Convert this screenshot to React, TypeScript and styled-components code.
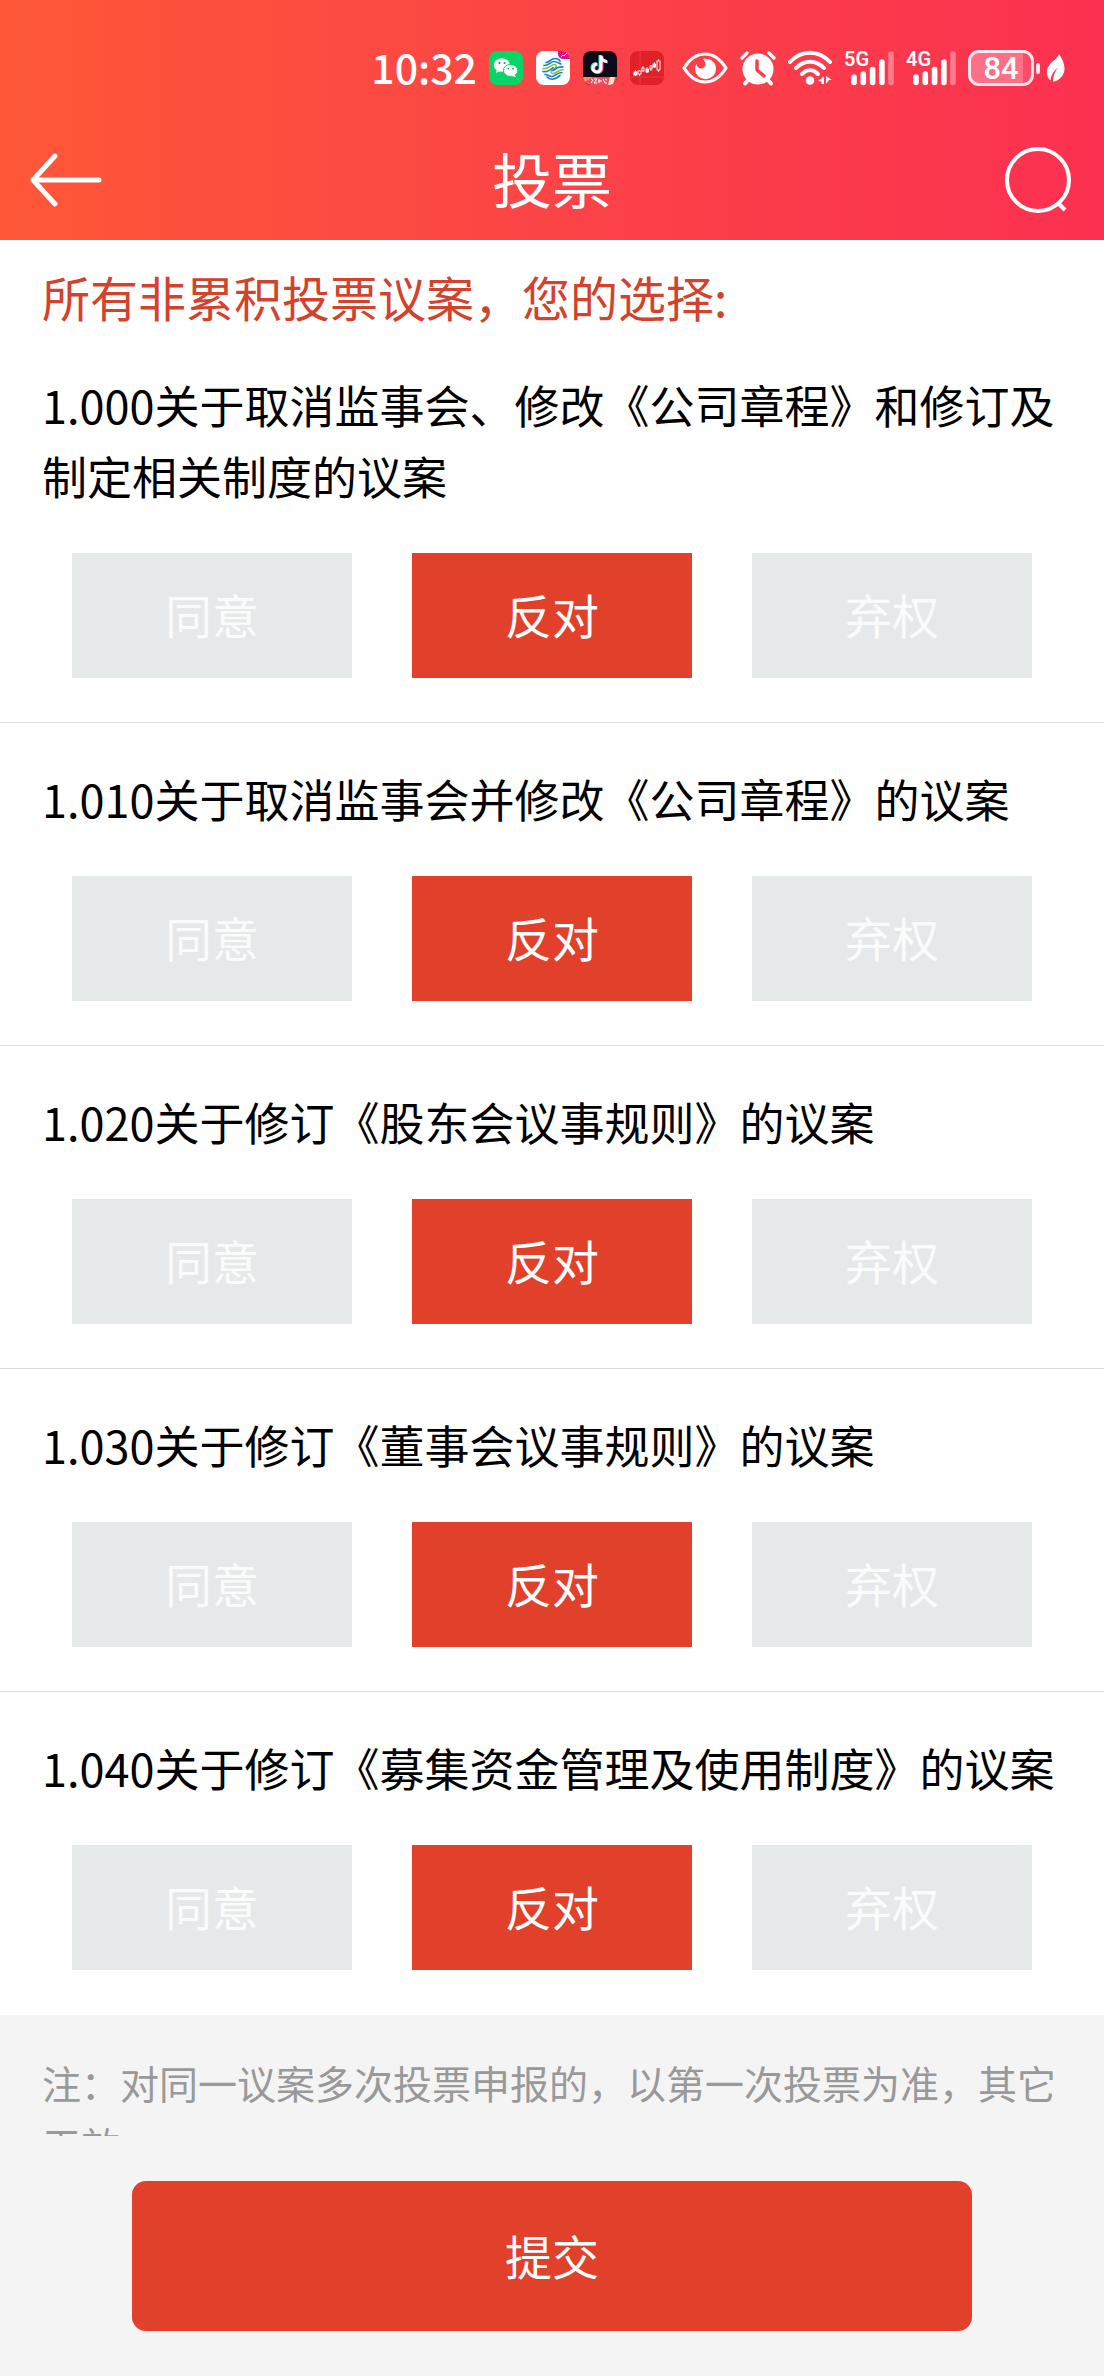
import React, { useState } from "react";
import styled, { createGlobalStyle } from "styled-components";

const GlobalStyle = createGlobalStyle`
  * { box-sizing: border-box; }
  body { margin: 0; background: #f4f4f4; }
  button { font: inherit; border: 0; padding: 0; cursor: pointer; }
`;

const Screen = styled.div`
  display: flex;
  flex-direction: column;
  height: 100vh;
  background: #f4f4f4;
  color: #000;
  font-family: "Noto Sans CJK SC", "Noto Sans", sans-serif;
`;

const Header = styled.header`
  flex: none;
  background: linear-gradient(90deg, #ff5738 0%, #fb4247 55%, #fc3051 100%);
  color: #fff;
`;

const StatusBar = styled.div`
  display: flex;
  align-items: center;
  justify-content: flex-end;
  gap: 12px;
  height: 120px;
  padding: 16px 38px 0 0;
`;

const Clock = styled.time`
  padding-bottom: 4px;
  font-size: 41px;
  line-height: 48px;
  font-weight: 500;
`;

const AppIcons = styled.div`
  display: flex;
  gap: 13px;
  margin-right: 6px;
`;

const BatteryGroup = styled.div`
  display: flex;
  align-items: center;
  gap: 2px;
`;

const Battery = styled.span`
  width: 66px;
  height: 36px;
  border: 3px solid #ffe9ee;
  border-radius: 11px;
  background: linear-gradient(90deg, #fd7188 86%, #fc4a68 86%);
  font-family: Roboto, sans-serif;
  font-size: 31px;
  line-height: 31px;
  font-weight: 500;
  text-align: center;
`;

const BatteryCap = styled.span`
  width: 4px;
  height: 11px;
  border-radius: 2px;
  background: #ffe9ee;
  margin-right: 4px;
`;

const NavBar = styled.div`
  display: grid;
  grid-template-columns: 1fr auto 1fr;
  align-items: center;
  height: 120px;
  padding: 0 30px;
`;

const NavButton = styled.button<{ $end?: boolean }>`
  display: flex;
  justify-self: ${(p) => (p.$end ? "end" : "start")};
  background: none;
  color: inherit;
`;

const Title = styled.h1`
  margin: 0;
  padding-bottom: 4px;
  font-size: 60px;
  line-height: 72px;
  font-weight: 400;
`;

const Scroller = styled.main`
  flex: 1;
  min-height: 0;
  overflow-y: auto;
  scrollbar-width: none;
`;

const Ballot = styled.section`
  padding-top: 26px;
  background: #fff;
`;

const Lead = styled.h2`
  margin: 0;
  padding: 0 42px 3px;
  color: #d2422d;
  font-size: 48px;
  line-height: 60px;
  font-weight: 400;
`;

const Motion = styled.article`
  padding: 40px 42px 44px;
  border-bottom: 1px solid #dcdcdc;
  &:last-child { border-bottom-color: transparent; }
`;

const MotionTitle = styled.h3`
  margin: 0;
  font-size: 45px;
  line-height: 71px;
  font-weight: 400;
`;

const Choices = styled.div`
  display: grid;
  grid-template-columns: repeat(3, 1fr);
  gap: 60px;
  margin-top: 42px;
  padding: 0 30px;
`;

const Choice = styled.button<{ $active: boolean }>`
  height: 125px;
  padding-bottom: 4px;
  background: ${(p) => (p.$active ? "#e1402b" : "#e5e9e9")};
  color: ${(p) => (p.$active ? "#fff" : "#fafbfb")};
  font-size: 47px;
`;

const Note = styled.p`
  margin: 0;
  padding: 36px 42px;
  color: #999;
  font-size: 39px;
  line-height: 62px;
`;

const Footer = styled.footer`
  flex: none;
  display: flex;
  padding: 45px 12%;
`;

const Submit = styled.button`
  flex: 1;
  height: 150px;
  padding-bottom: 4px;
  border-radius: 14px;
  background: #e1402b;
  color: #fff;
  font-size: 47px;
`;

const WeChatIcon = () => (
  <svg width="34" height="34" viewBox="0 0 34 34" aria-hidden="true">
    <rect width="34" height="34" rx="8" fill="#08d566" />
    <ellipse cx="12.8" cy="14" rx="8" ry="6.8" fill="#fff" />
    <path d="M8 18l-1 4 4-2z" fill="#fff" />
    <ellipse cx="21.600" cy="19.400" rx="7.200" ry="6" fill="#fff" stroke="#08d566" strokeWidth="1" />
    <path d="M25 23l2 3-4-1z" fill="#fff" />
    <g fill="#08a850">
      <circle cx="10.400" cy="12" r="1.100" />
      <circle cx="15.600" cy="12" r="1.100" />
      <circle cx="19.400" cy="17.600" r="0.900" />
      <circle cx="24" cy="17.600" r="0.900" />
    </g>
  </svg>
);

const MobileIcon = () => (
  <svg width="34" height="34" viewBox="0 0 34 34" aria-hidden="true">
    <rect width="34" height="34" rx="8" fill="#fff" />
    <path d="M22 0h4a8 8 0 0 1 8 8h-7a5 5 0 0 1-5-5z" fill="#d8108c" />
    <path d="M25 6l2-2 1 1 3-3" fill="none" stroke="#fff" strokeWidth="1" />
    <g fill="none" strokeWidth="1.700" strokeLinecap="round" strokeLinejoin="round">
      <path d="M10 11.500c3 0 5-4 9-4 2 0 4 1 5 2.500" stroke="#1683c4" />
      <path d="M8 14.500c5 0 7-4 10-4s5 2 7 2.500" stroke="#1683c4" />
      <path d="M7 17.500c6 1 8-4 11-4 3 0 3 3 0 4.500s-4 4.500-1 4.500 5-3.500 10-4" stroke="#8cc33c" />
      <path d="M7 20.500c4 1 7-1 10-4M17 19.500c4-3 6-4 10-3.500" stroke="#1683c4" />
      <path d="M9 23.500c3 0 4 2 7 2s5-4 10-4" stroke="#1683c4" />
      <path d="M11 26c3 3 8 3 13-1.500" stroke="#1683c4" />
    </g>
  </svg>
);

const TikTokIcon = () => (
  <svg width="34" height="34" viewBox="0 0 34 34" aria-hidden="true">
    <clipPath id="tt"><rect width="34" height="34" rx="8" /></clipPath>
    <g clipPath="url(#tt)">
      <rect width="34" height="34" fill="#0b0a16" />
      <g fill="none" strokeWidth="3">
        <path d="M17 4v12.500a4 4 0 1 1-4-4M17 5c0 3 3 5 6 5" stroke="#35e5e2" />
        <path d="M19 5v12.500a4 4 0 1 1-4-4M19 6c0 3 3 5 6 5" stroke="#f83b60" />
        <path d="M18 4.500v12.500a4 4 0 1 1-4-4M18 5.500c0 3 3 5 6 5" stroke="#fff" />
      </g>
      <path d="M0 26h34v8H0z" fill="#ee4e5e" />
      <path d="M0 26h10L0 32z" fill="#f58a6a" />
      <path d="M8 28l2 1-2 3M11 28h3l-3 4h3M16 28v4M15 30h4M20 28l2 4h2M22 28l2 1" stroke="#fff" strokeWidth="1" fill="none" />
      <path d="M27 26h5l-2 8h-5z" fill="#ffe0b8" />
    </g>
  </svg>
);

const StockIcon = () => (
  <svg width="34" height="34" viewBox="0 0 34 34" aria-hidden="true">
    <rect width="34" height="34" rx="8" fill="#e02128" />
    <path d="M0 26h34M10 0v34" stroke="#ec4548" strokeWidth="0.700" />
    <g stroke="#fff" strokeWidth="0.900" fill="#fff">
      <path d="M5.500 19v6M9.500 19v6M13 15v6M17 16v6M21 14v6M24.500 11v6M28.500 8v13" />
      <rect x="4" y="21" width="3" height="3" />
      <rect x="8" y="20" width="3" height="3" fill="#e02128" />
      <rect x="12" y="17" width="2" height="3" fill="#e02128" />
      <rect x="16" y="18" width="2.500" height="3" />
      <rect x="20" y="15" width="2" height="3" fill="#e02128" />
      <rect x="23" y="13" width="2.500" height="3" />
      <rect x="27" y="10" width="3" height="9" fill="#e02128" />
    </g>
  </svg>
);

const EyeIcon = () => (
  <svg width="46" height="32" viewBox="0 0 46 32" aria-hidden="true">
    <path d="M2 16C8 6.500 15 2 23 2s15 4.500 21 14c-6 9.500-13 14-21 14S8 25.500 2 16z" fill="none" stroke="#fff" strokeWidth="3.200" strokeLinejoin="round" />
    <path d="M21 7c8-1 13 4 13 9.500A10.500 10.500 0 0 1 13 17c0-2 .5-3.500 1.500-5 .5 3 2.500 5 5.500 4.500 4-1 4.500-6 1-9.500z" fill="#fff" />
  </svg>
);

const AlarmIcon = () => (
  <svg width="36" height="36" viewBox="0 0 36 36" aria-hidden="true">
    <g stroke="#fff" strokeLinecap="round">
      <path d="M2 8l5-5M34 8l-5-5" strokeWidth="3.200" />
      <path d="M9 29l-4 4.500M27 29l4 4.500" strokeWidth="4" />
    </g>
    <circle cx="18" cy="19" r="15.500" fill="#fff" />
    <path d="M17 11v9l7 6" fill="none" stroke="#fb3d4b" strokeWidth="3.400" strokeLinecap="round" strokeLinejoin="round" />
  </svg>
);

const WifiIcon = () => (
  <svg width="44" height="36" viewBox="0 0 44 36" aria-hidden="true">
    <g fill="none" stroke="#fff" strokeWidth="4" strokeLinecap="round">
      <path d="M2 12C13 -0.500 31 -0.500 42 12" />
      <path d="M8 18c8-8.500 20-8.500 28 0" />
      <path d="M14 24c5-5 11-5 16 0" />
    </g>
    <circle cx="22" cy="30.500" r="4.300" fill="#fff" />
    <path d="M36 26v8h-2.500v-2.500L30 31zM38.500 26v8M38 26l6 4h-3l-3 4z" fill="#fff" />
  </svg>
);

const SignalBox = styled.span`
  position: relative;
  display: flex;
  width: 50px;
  height: 36px;
`;

const SignalLabel = styled.span`
  position: absolute;
  left: 0;
  top: 0;
  font-family: Roboto, sans-serif;
  font-size: 20px;
  line-height: 18px;
  font-weight: 600;
`;

const Signal = ({ label }: { label: string }) => (
  <SignalBox>
    <SignalLabel>{label}</SignalLabel>
    <svg width="50" height="36" viewBox="0 0 50 36" aria-hidden="true">
      <g stroke="#fff" strokeWidth="5.600" strokeLinecap="round">
        <path d="M10 27v5.500M19.300 24v8.500M28.600 19.500v13M37.900 12v20.500" />
        <path d="M47 4v28.500" opacity="0.350" />
      </g>
    </svg>
  </SignalBox>
);

const LeafIcon = () => (
  <svg width="20" height="30" viewBox="0 0 20 30" aria-hidden="true">
    <path d="M13 1c7 10 8 20-1 26-2 1-4 1.500-5 1.500 0-6 2-10 5-14-5 4-7 8-7.500 13C-1 23 0 15 5 10c3-3 6-4 8-9z" fill="#fff" />
  </svg>
);

const BackIcon = () => (
  <svg width="76" height="60" viewBox="0 0 76 60" fill="none" stroke="#fff" strokeWidth="5" strokeLinecap="round" strokeLinejoin="round" aria-hidden="true">
    <path d="M25 6L3 30l22 24M3 30h66" />
  </svg>
);

const SearchIcon = () => (
  <svg width="70" height="70" viewBox="0 0 70 70" fill="none" stroke="#fff" strokeWidth="4" aria-hidden="true">
    <circle cx="34" cy="35" r="31" />
    <path d="M54 58l7 7" />
  </svg>
);

const options = ["同意", "反对", "弃权"];

const motions = [
  "1.000关于取消监事会、修改《公司章程》和修订及制定相关制度的议案",
  "1.010关于取消监事会并修改《公司章程》的议案",
  "1.020关于修订《股东会议事规则》的议案",
  "1.030关于修订《董事会议事规则》的议案",
  "1.040关于修订《募集资金管理及使用制度》的议案",
];

export default function App() {
  const [votes, setVotes] = useState<string[]>(motions.map(() => "反对"));

  return (
    <Screen>
      <GlobalStyle />
      <Header>
        <StatusBar>
          <Clock>10:32</Clock>
          <AppIcons>
            <WeChatIcon />
            <MobileIcon />
            <TikTokIcon />
            <StockIcon />
          </AppIcons>
          <EyeIcon />
          <AlarmIcon />
          <WifiIcon />
          <Signal label="5G" />
          <Signal label="4G" />
          <BatteryGroup>
            <Battery>84</Battery>
            <BatteryCap />
            <LeafIcon />
          </BatteryGroup>
        </StatusBar>
        <NavBar>
          <NavButton type="button" aria-label="返回"><BackIcon /></NavButton>
          <Title>投票</Title>
          <NavButton type="button" aria-label="搜索" $end><SearchIcon /></NavButton>
        </NavBar>
      </Header>
      <Scroller>
        <Ballot>
          <Lead>所有非累积投票议案，您的选择:</Lead>
          {motions.map((motion, i) => (
            <Motion key={motion}>
              <MotionTitle>{motion}</MotionTitle>
              <Choices role="group" aria-label={motion}>
                {options.map((option) => (
                  <Choice
                    key={option}
                    type="button"
                    aria-pressed={votes[i] === option}
                    $active={votes[i] === option}
                    onClick={() => setVotes(votes.map((v, j) => (j === i ? option : v)))}
                  >
                    {option}
                  </Choice>
                ))}
              </Choices>
            </Motion>
          ))}
        </Ballot>
        <Note>注：对同一议案多次投票申报的，以第一次投票为准，其它无效。</Note>
      </Scroller>
      <Footer>
        <Submit type="button">提交</Submit>
      </Footer>
    </Screen>
  );
}
